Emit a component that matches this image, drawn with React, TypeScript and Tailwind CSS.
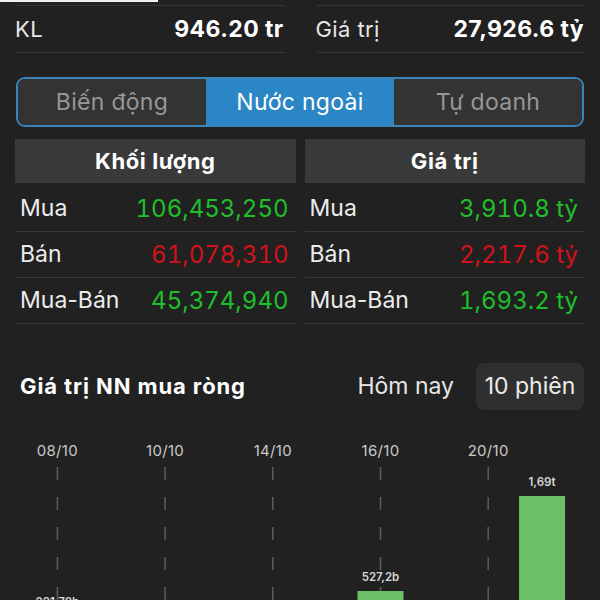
import React from "react";

const topStats = [
  { label: "KL", value: "946.20 tr" },
  { label: "Giá trị", value: "27,926.6 tỷ" },
];

const tabs = ["Biến động", "Nước ngoài", "Tự doanh"];

const GREEN = "text-[#1fbf2c]";
const RED = "text-[#d4111b]";

const tables = [
  {
    title: "Khối lượng",
    rows: [
      { label: "Mua", value: "106,453,250", up: true },
      { label: "Bán", value: "61,078,310", up: false },
      { label: "Mua-Bán", value: "45,374,940", up: true },
    ],
  },
  {
    title: "Giá trị",
    rows: [
      { label: "Mua", value: "3,910.8 tỷ", up: true },
      { label: "Bán", value: "2,217.6 tỷ", up: false },
      { label: "Mua-Bán", value: "1,693.2 tỷ", up: true },
    ],
  },
];

// 10 sessions, label every other one
const dates = ["08/10", "10/10", "14/10", "16/10", "20/10"];
const bars = [
  { i: 0, top: 206, label: "221,78b" },
  { i: 6, top: 181, label: "527,2b" },
  { i: 9, top: 86, label: "1,69t" },
];
const x0 = 57.4;
const step = 53.85;
const base = 224;

function NetChart() {
  return (
    <svg width="600" height="230" className="block">
      {dates.map((d, k) => {
        const x = x0 + step * 2 * k;
        return (
          <g key={d}>
            <text
              x={x}
              y={42}
              textAnchor="middle"
              dominantBaseline="middle"
              fontSize="15"
              letterSpacing="0.3"
              fill="#c9c9c9"
              fontFamily="Inter, sans-serif"
            >
              {d}
            </text>
            <line x1={x} y1={57} x2={x} y2={230} stroke="#5c5c5c" strokeWidth="1.5" strokeDasharray="13 17" />
          </g>
        );
      })}
      {bars.map((b) => {
        const cx = x0 + step * b.i;
        return (
          <g key={b.i}>
            <rect x={cx - 23} y={b.top} width={46} height={base - b.top} fill="#6bbf66" />
            <text
              x={cx}
              y={b.top - 13}
              textAnchor="middle"
              dominantBaseline="middle"
              fontSize="11.5"
              fontWeight="600"
              fill="#d6d6d6"
              fontFamily="Inter, sans-serif"
            >
              {b.label}
            </text>
          </g>
        );
      })}
    </svg>
  );
}

export default function App() {
  return (
    <div className="w-[600px] h-[600px] overflow-hidden bg-[#212121] text-white font-['Inter','Noto_Sans',sans-serif]">
      <div className="h-[2px] w-[158px] bg-[#f2f2f2]" />

      {/* market totals */}
      <div className="grid grid-cols-2 gap-[31px] px-[15px]">
        {topStats.map((s) => (
          <div key={s.label}>
            <div className="h-[4px] border-b border-[#353535]" />
            <div className="h-[47px] flex items-center justify-between border-b border-[#353535] pr-[1px]">
              <span className="text-[22px] tracking-[0.4px] text-[#e6e6e6]">{s.label}</span>
              <span className="text-[23px] tracking-[0.4px] font-bold">{s.value}</span>
            </div>
          </div>
        ))}
      </div>

      {/* segmented tabs */}
      <div className="mx-[16px] mt-[24px] h-[50px] flex rounded-[9px] border-2 border-[#3a86bb] overflow-hidden">
        {tabs.map((t, idx) => (
          <div
            key={t}
            className={
              idx === 1
                ? "flex-1 flex items-center justify-center bg-[#2b86c6] text-white text-[23px] tracking-[0.3px]"
                : "flex-1 flex items-center justify-center bg-[#333333] text-[#979797] text-[23px] tracking-[0.3px]"
            }
          >
            {t}
          </div>
        ))}
      </div>

      {/* foreign trading tables */}
      <div className="grid grid-cols-2 gap-[9px] px-[15px] mt-[12px]">
        {tables.map((tb) => (
          <div key={tb.title}>
            <div className="h-[44px] bg-[#393939] flex items-center justify-center text-[22px] tracking-[0.6px] font-bold mb-[3px]">
              {tb.title}
            </div>
            {tb.rows.map((r) => (
              <div
                key={r.label}
                className="h-[46px] flex items-center justify-between border-b border-[#383838] pl-[5px] pr-[7px]"
              >
                <span className="text-[23px] text-[#ececec]">{r.label}</span>
                <span className={`text-[24px] tabular-nums ${r.up ? GREEN : RED}`}>{r.value}</span>
              </div>
            ))}
          </div>
        ))}
      </div>

      {/* chart header */}
      <div className="mt-[39px] pl-[20px] pr-[16px] flex items-center">
        <span className="flex-1 text-[22px] tracking-[0.9px] font-bold">Giá trị NN mua ròng</span>
        <span className="text-[23px] text-[#e6e6e6] mr-[22px]">Hôm nay</span>
        <span className="h-[47px] w-[108px] rounded-[8px] bg-[#2f2f2f] flex items-center justify-center text-[23px] text-[#ececec]">
          10 phiên
        </span>
      </div>

      <NetChart />
    </div>
  );
}
